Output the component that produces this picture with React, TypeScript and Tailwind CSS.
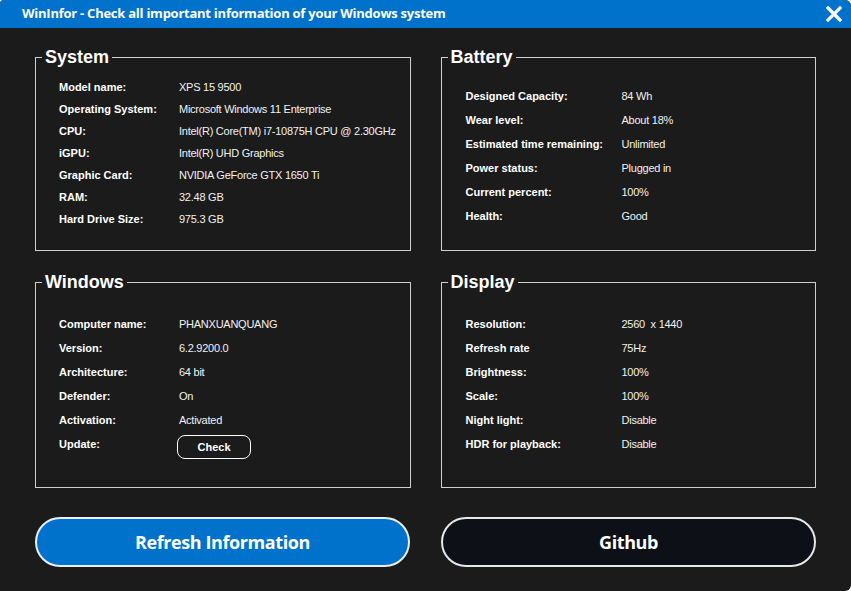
import React from "react";

type Row = { label: string; value: React.ReactNode };

const system: Row[] = [
  { label: "Model name:", value: "XPS 15 9500" },
  { label: "Operating System:", value: "Microsoft Windows 11 Enterprise" },
  { label: "CPU:", value: "Intel(R) Core(TM) i7-10875H CPU @ 2.30GHz" },
  { label: "iGPU:", value: "Intel(R) UHD Graphics" },
  { label: "Graphic Card:", value: "NVIDIA GeForce GTX 1650 Ti" },
  { label: "RAM:", value: "32.48 GB" },
  { label: "Hard Drive Size:", value: "975.3 GB" },
];

const battery: Row[] = [
  { label: "Designed Capacity:", value: "84 Wh" },
  { label: "Wear level:", value: "About 18%" },
  { label: "Estimated time remaining:", value: "Unlimited" },
  { label: "Power status:", value: "Plugged in" },
  { label: "Current percent:", value: "100%" },
  { label: "Health:", value: "Good" },
];

const windows: Row[] = [
  { label: "Computer name:", value: "PHANXUANQUANG" },
  { label: "Version:", value: "6.2.9200.0" },
  { label: "Architecture:", value: "64 bit" },
  { label: "Defender:", value: "On" },
  { label: "Activation:", value: "Activated" },
  {
    label: "Update:",
    value: (
      <button className="-ml-[2px] mt-[6px] h-[24px] w-[74px] rounded-[8px] border border-white text-[11px] font-bold tracking-normal text-white">
        Check
      </button>
    ),
  },
];

const display: Row[] = [
  { label: "Resolution:", value: "2560  x 1440" },
  { label: "Refresh rate", value: "75Hz" },
  { label: "Brightness:", value: "100%" },
  { label: "Scale:", value: "100%" },
  { label: "Night light:", value: "Disable" },
  { label: "HDR for playback:", value: "Disable" },
];

function Group({
  title,
  rows,
  labelWidth,
  rowHeight,
  padTop,
  padLeft,
  height,
}: {
  title: string;
  rows: Row[];
  labelWidth: string;
  rowHeight: string;
  padTop: string;
  padLeft: string;
  height: string;
}) {
  return (
    <fieldset className={`border border-[#d0d0d0] ${height}`}>
      <legend className="ml-[6px] px-[3px] text-[18px] leading-[20px] font-bold text-white">
        {title}
      </legend>
      <div className={`flex flex-col ${padLeft} ${padTop}`}>
        {rows.map((r) => (
          <div key={r.label} className={`flex items-center ${rowHeight}`}>
            <div className={`${labelWidth} text-[11px] font-bold text-white`}>{r.label}</div>
            <div className="flex text-[11px] tracking-[-0.25px] text-[#f2f2f2] whitespace-pre">{r.value}</div>
          </div>
        ))}
      </div>
    </fieldset>
  );
}

export default function App() {
  return (
    <div className="h-[591px] w-[851px] overflow-hidden rounded-tr-[6px] rounded-tl-[4px] rounded-br-[6px] bg-[#1b1b1b] font-['Liberation_Sans',Arial,sans-serif]">
      {/* title bar */}
      <div className="flex h-[28px] items-center justify-between bg-[#0072cc] pl-[22px] pr-[9px]">
        <span className="font-['Open_Sans',sans-serif] text-[13px] font-bold tracking-[-0.25px] text-white">
          WinInfor - Check all important information of your Windows system
        </span>
        <svg width="16" height="16" viewBox="0 0 16 16">
          <path d="M2 2 L14 14 M14 2 L2 14" stroke="white" strokeWidth="3.2" strokeLinecap="square" />
        </svg>
      </div>

      <div className="grid grid-cols-2 gap-x-[30px] gap-y-[21px] px-[35px] pt-[19px]">
        <Group title="System" rows={system} labelWidth="w-[120px]" rowHeight="h-[22px]" padTop="pt-[9px]" padLeft="pl-[23px]" height="h-[204px]" />
        <Group title="Battery" rows={battery} labelWidth="w-[156px]" rowHeight="h-[24px]" padTop="pt-[17px]" padLeft="pl-[24px]" height="h-[204px]" />
        <Group title="Windows" rows={windows} labelWidth="w-[120px]" rowHeight="h-[24px]" padTop="pt-[20px]" padLeft="pl-[23px]" height="h-[216px]" />
        <Group title="Display" rows={display} labelWidth="w-[156px]" rowHeight="h-[24px]" padTop="pt-[20px]" padLeft="pl-[24px]" height="h-[216px]" />
      </div>

      <div className="mt-[29px] grid grid-cols-2 gap-x-[31px] px-[35px]">
        <button className="h-[50px] rounded-full border-2 border-[#e8eef6] bg-[#0072cc] font-['Open_Sans',sans-serif] text-[18px] font-bold tracking-[-0.4px] text-white">
          Refresh Information
        </button>
        <button className="h-[50px] rounded-full border-2 border-[#e8e8e8] bg-[#0d1017] font-['Open_Sans',sans-serif] text-[18px] font-bold tracking-[-0.4px] text-white">
          Github
        </button>
      </div>
    </div>
  );
}
